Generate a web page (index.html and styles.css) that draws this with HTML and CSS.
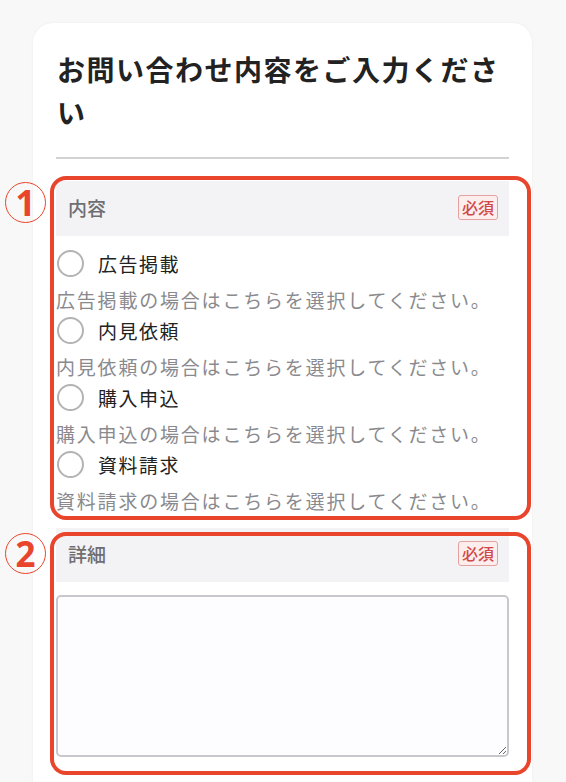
FILE: index.html
```html
<!DOCTYPE html>
<html lang="ja">
<head>
    <meta charset="UTF-8">
    <meta name="viewport" content="width=device-width, initial-scale=1.0">
    <title>お問い合わせ</title>
    <link rel="stylesheet" href="styles.css">
</head>
<body>
    <div class="card">
        <h2 class="card-title">お問い合わせ内容をご入力ください</h2>
        <div class="divider"></div>

        <div class="field field-kind">
            <span class="step">1</span>
            <span class="note-box"></span>
            <div class="field-head">
                <span class="field-label">内容</span>
                <span class="badge">必須</span>
            </div>
            <div class="options">
                <label class="option">
                    <span class="option-row"><input type="radio" name="kind" class="radio"><span class="option-name">広告掲載</span></span>
                    <span class="option-desc">広告掲載の場合はこちらを選択してください。</span>
                </label>
                <label class="option">
                    <span class="option-row"><input type="radio" name="kind" class="radio"><span class="option-name">内見依頼</span></span>
                    <span class="option-desc">内見依頼の場合はこちらを選択してください。</span>
                </label>
                <label class="option">
                    <span class="option-row"><input type="radio" name="kind" class="radio"><span class="option-name">購入申込</span></span>
                    <span class="option-desc">購入申込の場合はこちらを選択してください。</span>
                </label>
                <label class="option">
                    <span class="option-row"><input type="radio" name="kind" class="radio"><span class="option-name">資料請求</span></span>
                    <span class="option-desc">資料請求の場合はこちらを選択してください。</span>
                </label>
            </div>
        </div>

        <div class="field field-detail">
            <span class="step">2</span>
            <span class="note-box"></span>
            <div class="field-head">
                <span class="field-label">詳細</span>
                <span class="badge">必須</span>
            </div>
            <textarea class="detail-input"></textarea>
        </div>
    </div>
</body>
</html>
```

FILE: styles.css
```css
* {
    margin: 0;
    padding: 0;
    box-sizing: border-box;
    font-family: "Noto Sans CJK JP", "Noto Sans", sans-serif;
}

body {
    background: #f8f8f8;
    overflow: hidden;
}

.card {
    width: 499px;
    height: 759px;
    margin: 23px 0 0 33px;
    padding: 25px 23px 0;
    background: #fff;
    border-radius: 20px 20px 0 0;
    box-shadow: 0 0 3px rgba(0, 0, 0, 0.05);
}

.card-title {
    font-size: 28px;
    font-weight: bold;
    line-height: 43px;
    letter-spacing: 1.5px;
    color: #222;
    padding-left: 1px;
}

.divider {
    height: 2px;
    background: #d2d2d2;
    margin: 23px 0 22px;
}

/* each form field */
.field {
    position: relative;
}

.field-detail {
    margin-top: 14px;
}

.field-head {
    height: 55px;
    padding: 0 11px 3px 12px;
    display: flex;
    justify-content: space-between;
    align-items: center;
    background: #f3f3f5;
}

.field-detail .field-head {
    height: 54px;
}

.field-label {
    font-size: 19px;
    font-weight: 500;
    color: #6e6e73;
}

.badge {
    height: 25px;
    padding: 0 3px;
    font-size: 16px;
    font-weight: 500;
    line-height: 23px;
    color: #d04848;
    background: #fdeeee;
    border: 1px solid #e6a0a0;
    border-radius: 3px;
}

/* radio list */
.options {
    margin-top: 10px;
}

.option {
    display: block;
    height: 67px;
}

.option-row {
    height: 34px;
    display: flex;
    align-items: center;
    gap: 14px;
}

.radio {
    appearance: none;
    width: 27px;
    height: 27px;
    margin-left: 1px;
    border: 2.5px solid #b3b3b6;
    border-radius: 50%;
    background: #fff;
}

.option-name {
    font-size: 19px;
    letter-spacing: 1.5px;
    color: #222;
}

.option-desc {
    display: block;
    margin-top: 7px;
    font-size: 19px;
    line-height: 26px;
    letter-spacing: 1.8px;
    color: #8a8a8e;
    white-space: nowrap;
}

.detail-input {
    display: block;
    width: 100%;
    height: 162px;
    margin-top: 13px;
    background: #fdfdff;
    border: 2px solid #c8c8cc;
    border-radius: 5px;
}

/* red outline and numbered markers over the fields */
.note-box {
    position: absolute;
    top: -5px;
    left: -6px;
    right: -22px;
    bottom: -6px;
    border: 4px solid #e8452c;
    border-radius: 16px;
    pointer-events: none;
}

.field-detail .note-box {
    top: 4px;
    bottom: -18px;
}

.step {
    position: absolute;
    top: 1px;
    left: -51px;
    width: 41px;
    height: 41px;
    display: flex;
    align-items: center;
    justify-content: center;
    border: 1.5px solid #e8452c;
    border-radius: 50%;
    font-family: "Noto Sans", sans-serif;
    font-size: 35px;
    font-weight: bold;
    line-height: 1;
    color: #e8452c;
}

.field-detail .step {
    top: 5px;
}
```
